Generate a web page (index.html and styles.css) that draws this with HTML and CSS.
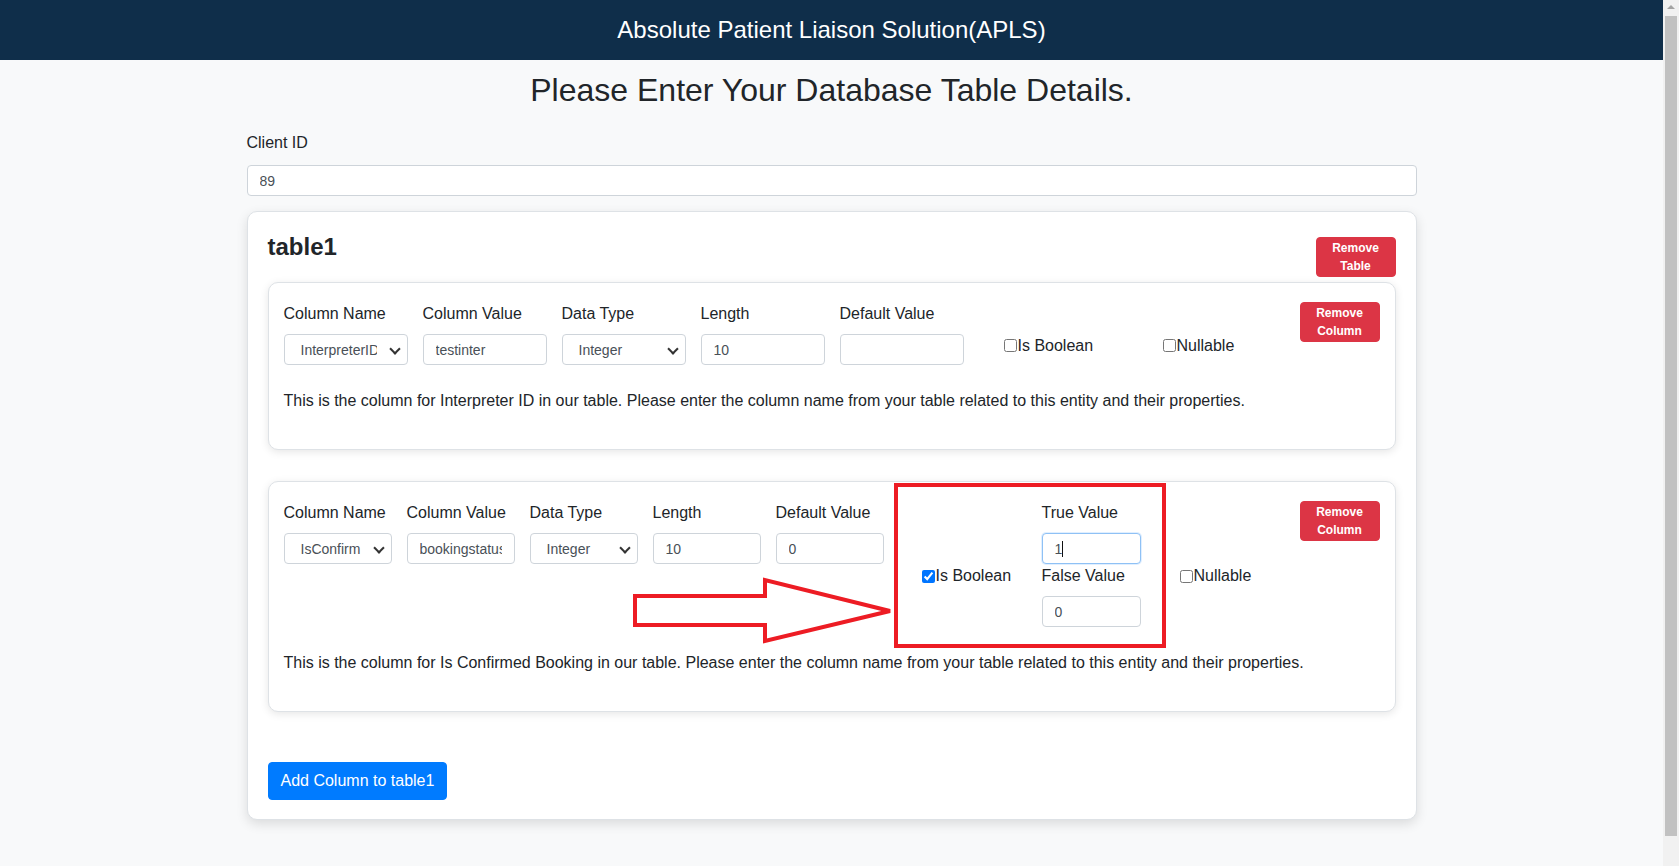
FILE: index.html
```html
<!DOCTYPE html>
<html lang="en">
<head>
<meta charset="utf-8">
<title>APLS - Database Table Details</title>
<link rel="stylesheet" href="styles.css">
</head>
<body>
<div class="screen">
  <div class="app">
    <header class="topbar">Absolute Patient Liaison Solution(APLS)</header>
    <main class="container">
      <h1 class="page-title">Please Enter Your Database Table Details.</h1>

      <div class="client">
        <label class="client-label">Client ID</label>
        <input class="control" type="text" value="89">
      </div>

      <section class="table-card">
        <div class="table-head">
          <h3 class="table-title">table1</h3>
          <button class="btn-danger btn-head">Remove Table</button>
        </div>

        <div class="col-card">
          <div class="col-row">
            <div class="field">
              <label class="field-label">Column Name</label>
              <span class="select-wrap"><select class="control select"><option>InterpreterID</option></select></span>
            </div>
            <div class="field">
              <label class="field-label">Column Value</label>
              <input class="control" type="text" value="testinter">
            </div>
            <div class="field">
              <label class="field-label">Data Type</label>
              <span class="select-wrap"><select class="control select"><option>Integer</option></select></span>
            </div>
            <div class="field">
              <label class="field-label">Length</label>
              <input class="control" type="text" value="10">
            </div>
            <div class="field">
              <label class="field-label">Default Value</label>
              <input class="control" type="text" value="">
            </div>
            <label class="check check-bool-1"><input type="checkbox">Is Boolean</label>
            <label class="check"><input type="checkbox">Nullable</label>
            <button class="btn-danger btn-col">Remove Column</button>
          </div>
          <p class="desc">This is the column for Interpreter ID in our table. Please enter the column name from your table related to this entity and their properties.</p>
        </div>

        <div class="col-card col-card-narrow">
          <div class="col-row">
            <div class="field">
              <label class="field-label">Column Name</label>
              <span class="select-wrap"><select class="control select"><option>IsConfirm</option></select></span>
            </div>
            <div class="field">
              <label class="field-label">Column Value</label>
              <input class="control" type="text" value="bookingstatus">
            </div>
            <div class="field">
              <label class="field-label">Data Type</label>
              <span class="select-wrap"><select class="control select"><option>Integer</option></select></span>
            </div>
            <div class="field">
              <label class="field-label">Length</label>
              <input class="control" type="text" value="10">
            </div>
            <div class="field">
              <label class="field-label">Default Value</label>
              <input class="control" type="text" value="0">
            </div>
            <label class="check check-bool-2"><input type="checkbox" checked>Is Boolean</label>
            <div class="bool-values">
              <label class="field-label">True Value</label>
              <input class="control control-focus" type="text" value="1">
              <label class="field-label">False Value</label>
              <input class="control" type="text" value="0">
            </div>
            <label class="check check-null-2"><input type="checkbox">Nullable</label>
            <button class="btn-danger btn-col">Remove Column</button>
          </div>
          <p class="desc">This is the column for Is Confirmed Booking in our table. Please enter the column name from your table related to this entity and their properties.</p>
        </div>

        <button class="btn-primary">Add Column to table1</button>
      </section>
    </main>
  </div>
  <div class="scrollbar">
    <span class="sb-up"></span>
    <span class="sb-thumb"></span>
  </div>
</div>

<svg class="annotation" width="1679" height="866" viewBox="0 0 1679 866">
  <polygon points="635,596 765,596 765,580 890,611 765,641 765,625 635,625" fill="none" stroke="#ed1c24" stroke-width="4" stroke-linejoin="miter" stroke-miterlimit="3"/>
  <rect x="896" y="485" width="268" height="161" fill="none" stroke="#ed1c24" stroke-width="4"/>
</svg>
</body>
</html>
```

FILE: styles.css
```css
* {
  box-sizing: border-box;
}

html,
body {
  margin: 0;
  height: 100%;
  overflow: hidden;
}

body {
  position: relative;
  font-family: "Liberation Sans", Arial, sans-serif;
  font-size: 16px;
  color: #212529;
  background: #f8f9fa;
}

.screen {
  display: flex;
  height: 866px;
}

.app {
  flex: 1;
  min-width: 0;
}

.topbar {
  height: 60px;
  background: #0f2e4a;
  color: #ffffff;
  display: flex;
  align-items: center;
  justify-content: center;
  font-size: 24px;
}

.container {
  width: 1170px;
  margin: 0 auto;
}

.page-title {
  font-size: 32px;
  font-weight: 400;
  line-height: 38px;
  text-align: center;
  margin: 11px 0 22px;
}

.client-label {
  display: block;
  line-height: 24px;
  margin-bottom: 10px;
}

.control {
  display: block;
  width: 100%;
  height: 31px;
  border: 1px solid #ced4da;
  border-radius: 4px;
  background: #ffffff;
  font-family: "Liberation Sans", Arial, sans-serif;
  font-size: 14px;
  color: #495057;
  padding: 0 12px;
  outline: none;
}

.control-focus {
  border-color: #8fc1f5;
  box-shadow: 0 0 0 1px rgba(0, 123, 255, 0.12);
  background: #ffffff linear-gradient(#111, #111) no-repeat 19px 7px / 1px 16px;
}

.select-wrap {
  position: relative;
  display: block;
}

.select-wrap::after {
  content: "";
  position: absolute;
  right: 9px;
  top: 11px;
  width: 6px;
  height: 6px;
  border-right: 2px solid #333;
  border-bottom: 2px solid #333;
  transform: rotate(45deg);
  pointer-events: none;
}

.select {
  appearance: none;
  -webkit-appearance: none;
  padding: 0 30px 0 16px;
  color: #495057;
}

.table-card {
  margin-top: 15px;
  background: #ffffff;
  border: 1px solid #dee2e6;
  border-radius: 10px;
  box-shadow: 0 4px 12px rgba(0, 0, 0, 0.12);
  padding: 20px 20px 19px;
}

.table-head {
  display: flex;
  justify-content: space-between;
  align-items: flex-start;
  margin-bottom: 5px;
}

.table-title {
  margin: 0;
  font-size: 24px;
  line-height: 29px;
  font-weight: 700;
}

.btn-danger {
  width: 80px;
  background: #dc3545;
  color: #ffffff;
  border: 1px solid #dc3545;
  border-radius: 4px;
  font-family: "Liberation Sans", Arial, sans-serif;
  font-size: 12px;
  font-weight: 700;
  line-height: 18px;
  padding: 1px 4px;
  text-align: center;
}

.btn-head {
  margin-top: 5px;
}

.col-card {
  background: #ffffff;
  border: 1px solid #dee2e6;
  border-radius: 10px;
  box-shadow: 0 2px 8px rgba(0, 0, 0, 0.1);
  padding: 19px 15px;
}

.col-card + .col-card {
  margin-top: 31px;
}

.col-row {
  display: flex;
  align-items: center;
}

.field {
  align-self: flex-start;
  width: 124px;
  margin-right: 15px;
  flex-shrink: 0;
}

.col-card-narrow .field {
  width: 108px;
}

.field-label {
  display: block;
  line-height: 23px;
  margin-bottom: 9px;
}

.check {
  display: flex;
  align-items: center;
  margin-top: 24px;
  line-height: 22px;
  flex-shrink: 0;
}

.check input {
  margin: 0 1px 0 0;
  width: 13px;
  height: 13px;
}

.check-bool-1 {
  margin-left: 25px;
  width: 159px;
}

.check-bool-2 {
  margin-left: 23px;
  width: 120px;
}

.bool-values {
  align-self: flex-start;
  width: 99px;
  flex-shrink: 0;
}

.check-null-2 {
  margin-left: 39px;
}

.btn-col {
  margin-left: auto;
  align-self: flex-start;
}

.desc {
  margin: 27px 0 20px;
  line-height: 18px;
}

.btn-primary {
  margin-top: 50px;
  background: #007bff;
  color: #ffffff;
  border: 1px solid #007bff;
  border-radius: 4px;
  padding: 6px 12px;
  font-family: "Liberation Sans", Arial, sans-serif;
  font-size: 16px;
  line-height: 24px;
}

.scrollbar {
  width: 16px;
  background: #f1f1f1;
  display: flex;
  flex-direction: column;
  align-items: center;
}

.sb-up {
  width: 0;
  height: 0;
  margin-top: 5px;
  border-left: 4px solid transparent;
  border-right: 4px solid transparent;
  border-bottom: 4px solid #a3a3a3;
}

.sb-thumb {
  width: 12px;
  height: 820px;
  margin-top: 7px;
  background: #c1c1c1;
}

.annotation {
  position: absolute;
  left: 0;
  top: 0;
  pointer-events: none;
}
```
